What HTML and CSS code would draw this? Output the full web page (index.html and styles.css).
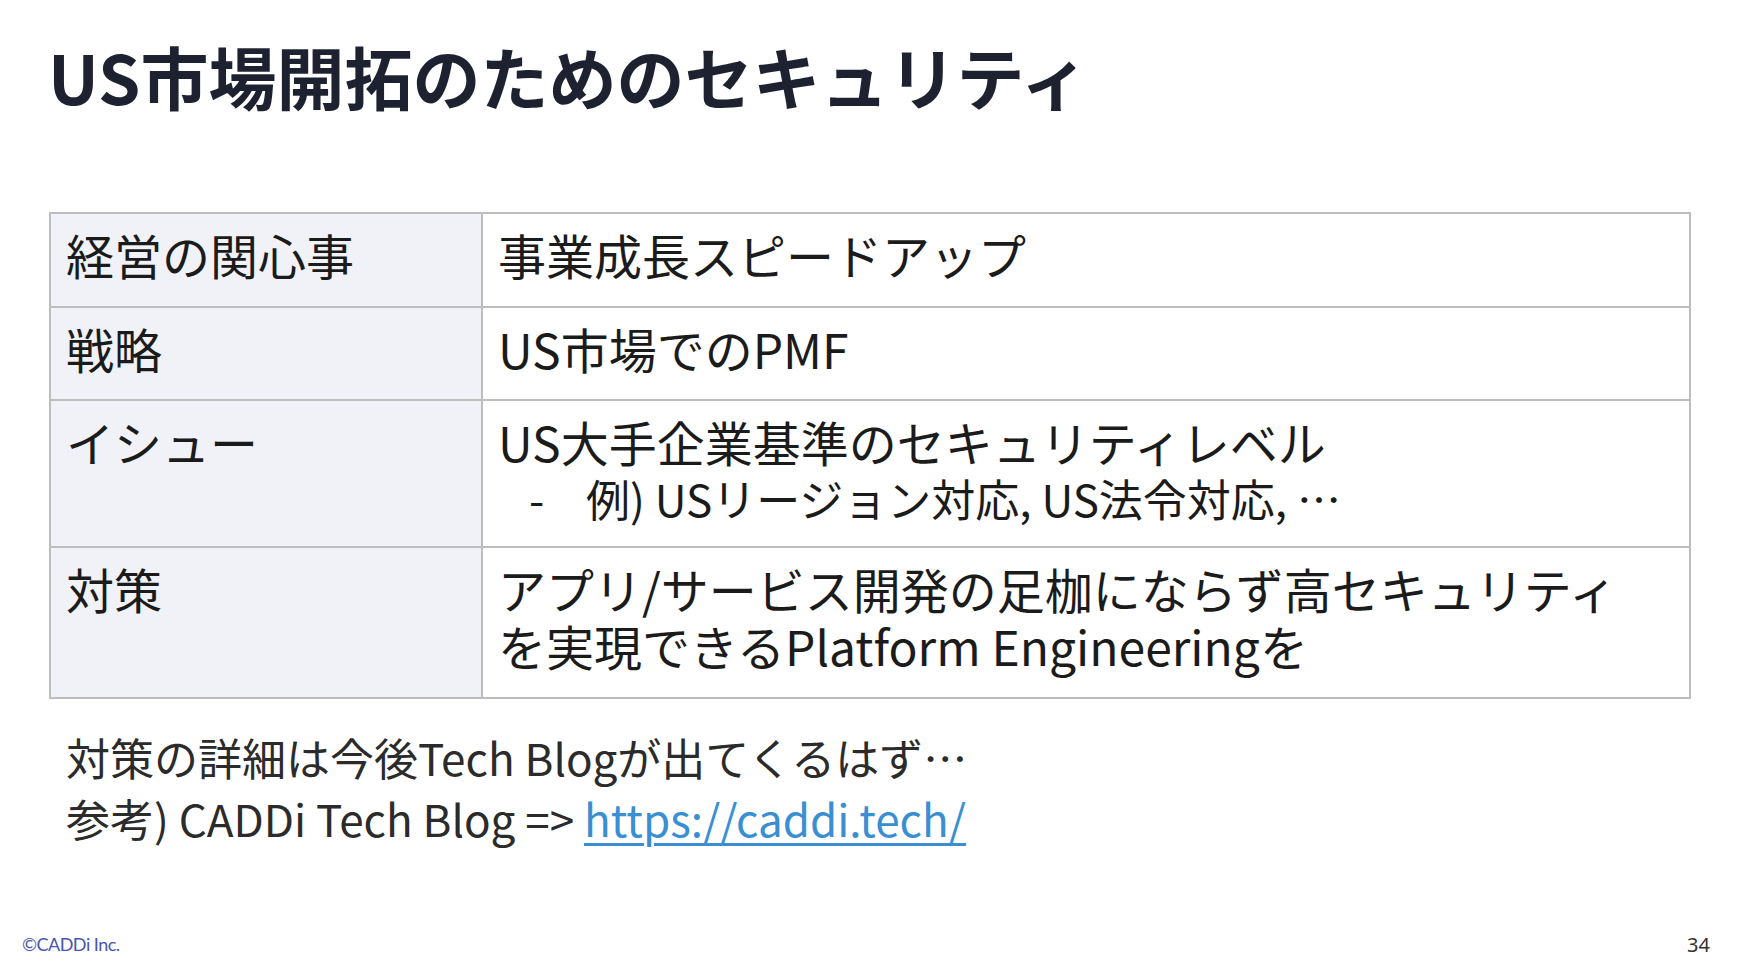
FILE: index.html
```html
<!DOCTYPE html>
<html lang="ja">
<head>
<meta charset="utf-8">
<title>US市場開拓のためのセキュリティ</title>
<link rel="stylesheet" href="styles.css">
</head>
<body>
<div class="slide">
  <h1 class="title">US市場開拓のためのセキュリティ</h1>
  <table class="grid">
    <tr class="row-1">
      <th class="label">経営の関心事</th>
      <td class="value">事業成長スピードアップ</td>
    </tr>
    <tr class="row-2">
      <th class="label">戦略</th>
      <td class="value">US市場でのPMF</td>
    </tr>
    <tr class="row-3">
      <th class="label">イシュー</th>
      <td class="value">US大手企業基準のセキュリティレベル
        <ul class="sub">
          <li><span class="dash">-</span>例) USリージョン対応, US法令対応, …</li>
        </ul>
      </td>
    </tr>
    <tr class="row-4">
      <th class="label">対策</th>
      <td class="value">アプリ/サービス開発の足枷にならず高セキュリティ<br>を実現できるPlatform Engineeringを</td>
    </tr>
  </table>
  <div class="notes">
    <p>対策の詳細は今後Tech Blogが出てくるはず…</p>
    <p>参考) CADDi Tech Blog =&gt; <a class="link" href="#">https://caddi.tech/</a></p>
  </div>
  <div class="footer">
    <span class="copy">©CADDi Inc.</span>
    <span class="page">34</span>
  </div>
</div>
</body>
</html>
```

FILE: styles.css
```css
html, body {
  margin: 0;
  padding: 0;
  background: #ffffff;
}

.slide {
  width: 1738px;
  height: 962px;
  box-sizing: border-box;
  display: flex;
  flex-direction: column;
  font-family: "Noto Sans CJK JP", "Noto Sans", sans-serif;
  color: #222222;
  overflow: hidden;
}

.title {
  margin: 36px 0 0 48px;
  font-size: 68px;
  line-height: 80px;
  font-weight: 700;
  color: #1e2230;
  letter-spacing: 0;
}

.grid {
  margin: 96px 0 0 49px;
  width: 1642px;
  border-collapse: collapse;
  border: 2px solid #bdbdbd;
}

.grid th,
.grid td {
  border: 2px solid #bdbdbd;
  vertical-align: top;
  text-align: left;
  font-weight: 400;
  font-size: 48px;
  line-height: 57px;
  color: #1b1b1b;
  padding: 12px 15px 0 15px;
  box-sizing: border-box;
}

.grid .label {
  width: 432px;
  background: #f0f2f7;
  padding-left: 15px;
}

.row-1 { height: 94px; }
.row-2 { height: 93px; }
.row-3 { height: 147px; }
.row-4 { height: 151px; }

.sub {
  list-style: none;
  margin: 0;
  padding: 0 0 0 31px;
  font-size: 44px;
  line-height: 57px;
}

.dash {
  display: inline-block;
  width: 57px;
}

.notes {
  margin: 28px 0 0 66px;
  font-size: 44px;
  line-height: 61px;
  color: #2b2b2b;
}

.notes p {
  margin: 0;
}

.link {
  color: #3a8fd2;
  text-decoration: underline;
  text-decoration-thickness: 3px;
  text-underline-offset: 6px;
}

.footer {
  margin-top: auto;
  display: flex;
  justify-content: space-between;
  align-items: center;
  padding: 0 28px 6px 22px;
  height: 24px;
}

.copy {
  font-family: Lato, "Noto Sans", sans-serif;
  font-size: 18px;
  color: #4656b0;
  letter-spacing: -0.5px;
}

.page {
  font-family: "Noto Sans", sans-serif;
  font-size: 20px;
  color: #333333;
}
```
